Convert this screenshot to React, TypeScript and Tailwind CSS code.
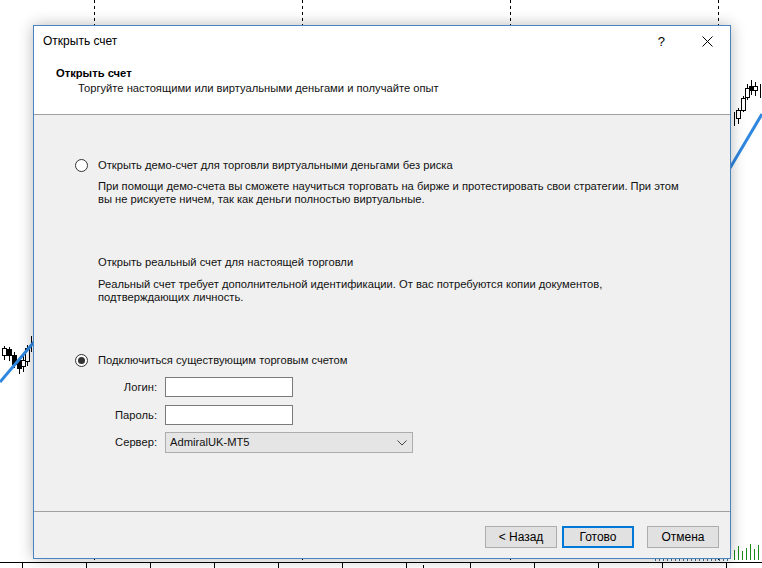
import React from 'react';

const font = "font-['Liberation_Sans',Arial,sans-serif]";

// background chart pieces: a free canvas, drawn with svg
const ChartBackdrop = () => {
    const ticks = Array.from({ length: 12 }, (_, i) => 22 + i * 64);
    const volumes = [10, 14, 9, 12, 16, 11, 15, 13];
    return (
        <svg className="absolute inset-0" width={762} height={568} viewBox="0 0 762 568">
            {[94, 302, 510, 718].map((x) => (
                <line key={x} x1={x + 0.5} y1={0} x2={x + 0.5} y2={560} stroke="#000" strokeDasharray="3 3" />
            ))}
            {/* left candles */}
            <g stroke="#000" strokeWidth={1} fill="#fff">
                <line x1={4.5} y1={346} x2={4.5} y2={360} />
                <rect x={2.5} y={348.5} width={4} height={7} />
                <line x1={9.5} y1={347} x2={9.5} y2={361} />
                <rect x={7.5} y={349.5} width={4} height={6} fill="#000" />
                <line x1={14.5} y1={352} x2={14.5} y2={368} />
                <rect x={12.5} y={355.5} width={4} height={9} fill="#000" />
                <line x1={19.5} y1={357} x2={19.5} y2={374} />
                <rect x={17.5} y={360.5} width={4} height={8} fill="#000" />
                <line x1={23.5} y1={356} x2={23.5} y2={372} />
                <rect x={21.5} y={360.5} width={4} height={6} />
                <line x1={27.5} y1={345} x2={27.5} y2={366} />
                <rect x={25.5} y={348.5} width={4} height={13} />
                <line x1={31.5} y1={336} x2={31.5} y2={352} />
            </g>
            <line x1={0} y1={382} x2={34} y2={342} stroke="#2f87e0" strokeWidth={3} />
            {/* right candles */}
            <g stroke="#000" strokeWidth={1} fill="#fff">
                <line x1={734.5} y1={112} x2={734.5} y2={126} />
                <line x1={738.5} y1={108} x2={738.5} y2={124} />
                <rect x={736.5} y={110.5} width={4} height={8} />
                <line x1={743.5} y1={96} x2={743.5} y2={112} />
                <rect x={741.5} y={98.5} width={4} height={12} />
                <line x1={747.5} y1={84} x2={747.5} y2={100} />
                <rect x={745.5} y={88.5} width={4} height={9} />
                <line x1={751.5} y1={80} x2={751.5} y2={95} />
                <rect x={749.5} y={86.5} width={4} height={4} fill="#000" />
                <line x1={755.5} y1={82} x2={755.5} y2={96} />
                <rect x={753.5} y={86.5} width={4} height={4} />
                <line x1={760.5} y1={84} x2={760.5} y2={98} />
            </g>
            <line x1={730} y1={168} x2={762} y2={114} stroke="#2f87e0" strokeWidth={3} />
            {/* volumes */}
            {volumes.map((h, i) => (
                <line key={i} x1={734.5 + i * 4} y1={560} x2={734.5 + i * 4} y2={560 - h} stroke="#1a8a1a" />
            ))}
            {Array.from({ length: 19 }, (_, i) => (
                <line key={'v' + i} x1={655.5 + i * 4} y1={561} x2={655.5 + i * 4} y2={558} stroke="#3a6f8f" />
            ))}
            {/* time axis */}
            <line x1={0} y1={562.5} x2={762} y2={562.5} stroke="#000" />
            {ticks.map((x) => (
                <line key={x} x1={x + 0.5} y1={562} x2={x + 0.5} y2={568} stroke="#000" />
            ))}
            <line x1={423.5} y1={565} x2={423.5} y2={568} stroke="#000" />
        </svg>
    );
};

const Radio = ({ checked }: { checked?: boolean }) => (
    <span className="w-[13px] h-[13px] rounded-full border border-[#333333] bg-white flex items-center justify-center shrink-0">
        {checked && <span className="w-[7px] h-[7px] rounded-full bg-[#333333]"></span>}
    </span>
);

const DialogButton = ({ label, primary }: { label: string; primary?: boolean }) => (
    <button
        className={
            primary
                ? 'w-[72px] h-[22px] bg-[#e1e1e1] border-2 border-[#0078d7] text-[12px] text-black flex items-center justify-center'
                : 'w-[72px] h-[22px] bg-[#e1e1e1] border border-[#adadad] text-[12px] text-black flex items-center justify-center'
        }
    >
        {label}
    </button>
);

const App: React.FC = () => {
    return (
        <div className={`relative w-[762px] h-[568px] overflow-hidden bg-white ${font}`}>
            <ChartBackdrop />

            {/* dialog window */}
            <div className="absolute left-[33px] top-[25px] w-[698px] h-[534px] border border-[#4a84bf] bg-[#f0f0f0] flex flex-col shadow-[0_0_14px_rgba(0,0,0,0.28)] text-[#111111] text-[11.2px] leading-[13px]">
                {/* title bar */}
                <div className="h-[31px] bg-white flex items-center pl-[9px] pr-[17px] shrink-0">
                    <span className="text-[12px] text-black">Открыть счет</span>
                    <div className="ml-auto flex items-center gap-[37px]">
                        <span className="text-[13px] mt-[-1px] text-black">?</span>
                        <svg width={11} height={11} viewBox="0 0 11 11">
                            <path d="M0.5 0.5 L10.5 10.5 M10.5 0.5 L0.5 10.5" stroke="#000" strokeWidth={1} />
                        </svg>
                    </div>
                </div>

                {/* header */}
                <div className="h-[58px] bg-white pt-[10px] pl-[22px] shrink-0 border-b border-[#a0a0a0]">
                    <div className="font-bold text-black">Открыть счет</div>
                    <div className="pl-[22px] mt-[2px]">Торгуйте настоящими или виртуальными деньгами и получайте опыт</div>
                </div>

                {/* body */}
                <div className="flex-1 pt-[44px] pl-[41px] flex flex-col">
                    <div className="flex items-center gap-[10px]">
                        <Radio />
                        <span>Открыть демо-счет для торговли виртуальными деньгами без риска</span>
                    </div>
                    <div className="pl-[23px] mt-[8px]">
                        При помощи демо-счета вы сможете научиться торговать на бирже и протестировать свои стратегии. При этом
                        <br />
                        вы не рискуете ничем, так как деньги полностью виртуальные.
                    </div>

                    <div className="pl-[23px] mt-[50px]">Открыть реальный счет для настоящей торговли</div>
                    <div className="pl-[23px] mt-[9px]">
                        Реальный счет требует дополнительной идентификации. От вас потребуются копии документов,
                        <br />
                        подтверждающих личность.
                    </div>

                    <div className="flex items-center gap-[10px] mt-[50px]">
                        <Radio checked />
                        <span>Подключиться существующим торговым счетом</span>
                    </div>

                    <div className="grid grid-cols-[59px_auto] items-center gap-x-[8px] mt-[10px] pl-[23px] w-fit">
                        <span className="text-right">Логин:</span>
                        <div className="w-[128px] h-[20px] bg-white border border-[#7a7a7a]"></div>
                        <span className="text-right mt-[8px]">Пароль:</span>
                        <div className="w-[128px] h-[20px] mt-[8px] bg-white border border-[#7a7a7a]"></div>
                        <span className="text-right mt-[7px]">Сервер:</span>
                        <div className="w-[248px] h-[21px] mt-[7px] bg-[#e5e5e5] border border-[#adadad] flex items-center pl-[4px] pr-[5px]">
                            <span>AdmiralUK-MT5</span>
                            <svg className="ml-auto" width={10} height={6} viewBox="0 0 10 6">
                                <path d="M0.5 0.5 L5 5 L9.5 0.5" stroke="#444" fill="none" />
                            </svg>
                        </div>
                    </div>
                </div>

                {/* footer */}
                <div className="h-[47px] shrink-0 border-t border-[#a0a0a0] flex items-start justify-end pt-[14px] pr-[11px]">
                    <DialogButton label="< Назад" />
                    <div className="ml-[5px]">
                        <DialogButton label="Готово" primary />
                    </div>
                    <div className="ml-[13px]">
                        <DialogButton label="Отмена" />
                    </div>
                </div>
            </div>
        </div>
    );
};

export default App;
